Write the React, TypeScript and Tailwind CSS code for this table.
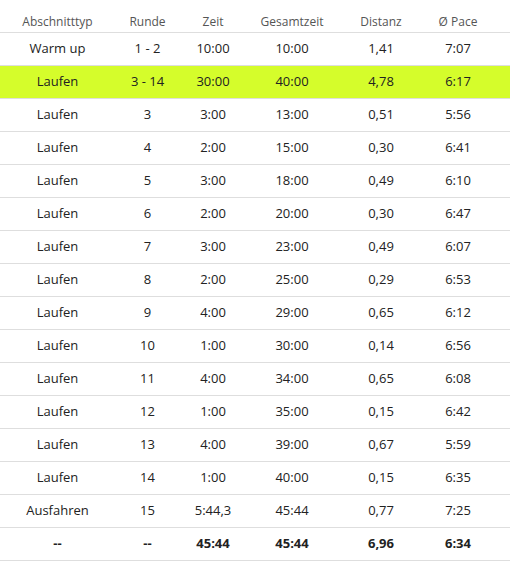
import React from 'react';

type Row = {
    typ: string;
    runde: string;
    zeit: string;
    gesamt: string;
    distanz: string;
    pace: string;
    active?: boolean;
};

const rows: Row[] = [
    { typ: 'Warm up', runde: '1 - 2', zeit: '10:00', gesamt: '10:00', distanz: '1,41', pace: '7:07' },
    { typ: 'Laufen', runde: '3 - 14', zeit: '30:00', gesamt: '40:00', distanz: '4,78', pace: '6:17', active: true },
    { typ: 'Laufen', runde: '3', zeit: '3:00', gesamt: '13:00', distanz: '0,51', pace: '5:56' },
    { typ: 'Laufen', runde: '4', zeit: '2:00', gesamt: '15:00', distanz: '0,30', pace: '6:41' },
    { typ: 'Laufen', runde: '5', zeit: '3:00', gesamt: '18:00', distanz: '0,49', pace: '6:10' },
    { typ: 'Laufen', runde: '6', zeit: '2:00', gesamt: '20:00', distanz: '0,30', pace: '6:47' },
    { typ: 'Laufen', runde: '7', zeit: '3:00', gesamt: '23:00', distanz: '0,49', pace: '6:07' },
    { typ: 'Laufen', runde: '8', zeit: '2:00', gesamt: '25:00', distanz: '0,29', pace: '6:53' },
    { typ: 'Laufen', runde: '9', zeit: '4:00', gesamt: '29:00', distanz: '0,65', pace: '6:12' },
    { typ: 'Laufen', runde: '10', zeit: '1:00', gesamt: '30:00', distanz: '0,14', pace: '6:56' },
    { typ: 'Laufen', runde: '11', zeit: '4:00', gesamt: '34:00', distanz: '0,65', pace: '6:08' },
    { typ: 'Laufen', runde: '12', zeit: '1:00', gesamt: '35:00', distanz: '0,15', pace: '6:42' },
    { typ: 'Laufen', runde: '13', zeit: '4:00', gesamt: '39:00', distanz: '0,67', pace: '5:59' },
    { typ: 'Laufen', runde: '14', zeit: '1:00', gesamt: '40:00', distanz: '0,15', pace: '6:35' },
    { typ: 'Ausfahren', runde: '15', zeit: '5:44,3', gesamt: '45:44', distanz: '0,77', pace: '7:25' },
];

const cols = 'grid grid-cols-[115px_65px_66px_92px_86px_68px_1fr]';

const App: React.FC = () => {
    return (
        <div className="w-[510px] bg-white text-[#222] font-['Open_Sans',sans-serif]">
            <div className={`${cols} h-[33px] items-end pb-[2px] border-b border-[#dedede] text-[12px] leading-4 text-[#555] text-center`}>
                <div>Abschnitttyp</div>
                <div>Runde</div>
                <div>Zeit</div>
                <div>Gesamtzeit</div>
                <div>Distanz</div>
                <div>Ø Pace</div>
                <div />
            </div>
            {rows.map((r, i) => (
                <div
                    key={i}
                    className={`${cols} h-[33px] items-center pb-[2px] border-b border-[#dedede] text-[13px] leading-[18px] text-center ${r.active ? 'bg-[#d5fd2b]' : ''}`}
                >
                    <div>{r.typ}</div>
                    <div>{r.runde}</div>
                    <div>{r.zeit}</div>
                    <div>{r.gesamt}</div>
                    <div>{r.distanz}</div>
                    <div>{r.pace}</div>
                    <div />
                </div>
            ))}
            <div className={`${cols} h-[33px] items-center pb-[2px] border-b border-[#dedede] text-[13px] leading-[18px] text-center font-bold`}>
                <div>--</div>
                <div>--</div>
                <div>45:44</div>
                <div>45:44</div>
                <div>6,96</div>
                <div>6:34</div>
                <div />
            </div>
        </div>
    );
};

export default App;
